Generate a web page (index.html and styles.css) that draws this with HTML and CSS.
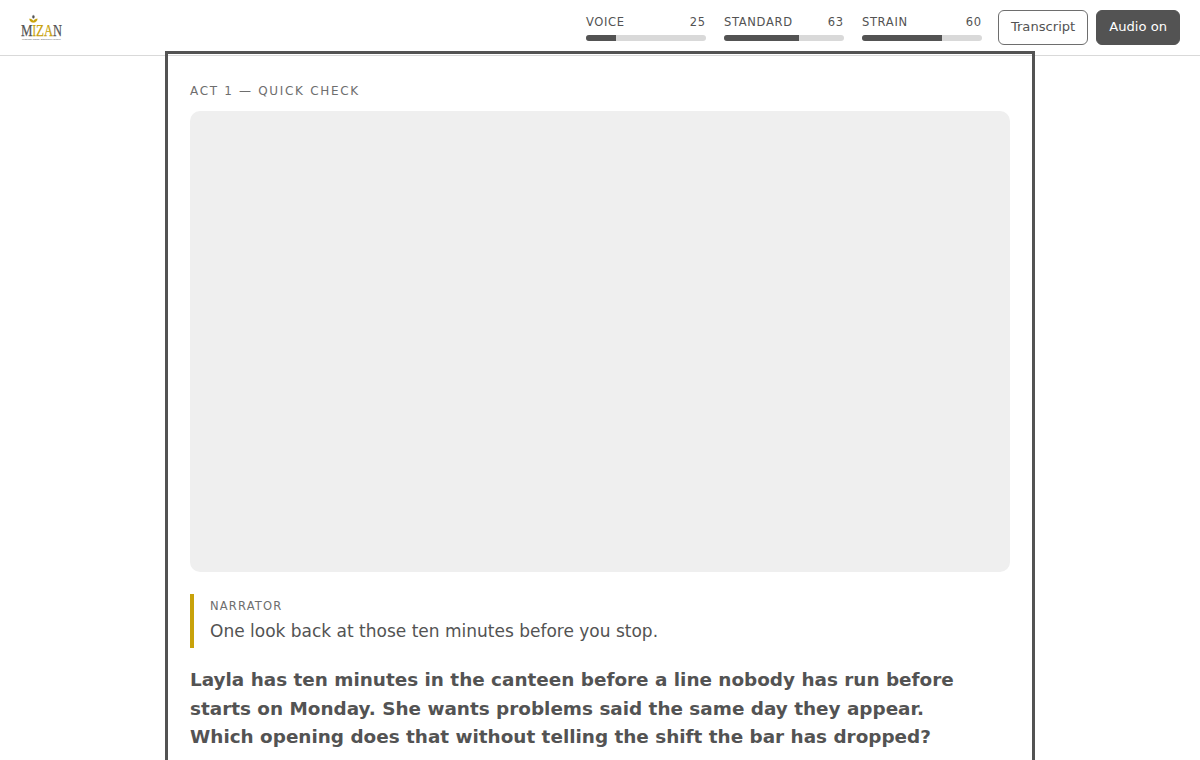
FILE: index.html
```
<!DOCTYPE html>
<html lang="en">
  <head>
    <meta charset="UTF-8">
    <meta name="viewport" content="width=device-width, initial-scale=1.0">
    <title>Mizan</title>
    <link rel="stylesheet" href="styles.css">
  </head>
  <body>
    <header class="topbar">
      <svg class="logo" viewBox="0 0 44 30" role="img" aria-label="Mizan">
        <!-- Crown over the I -->
        <ellipse class="logo-dark" cx="13.4" cy="3.8" rx="1.1" ry="1.6"/>
        <path class="logo-gold" d="M9.4 5.8c1.8 0 3 .8 4 2.2 1-1.4 2.2-2.2 4-2.2-.4 2.5-1.8 3.7-4 3.7s-3.6-1.2-4-3.7z"/>
        <!-- Wordmark -->
        <text class="logo-word" y="22.6"><tspan class="logo-dark" x="1" textLength="11.5" lengthAdjust="spacingAndGlyphs">M</tspan><tspan class="logo-gold" x="12.5" textLength="3.5" lengthAdjust="spacingAndGlyphs">I</tspan><tspan class="logo-gold" x="16" textLength="8" lengthAdjust="spacingAndGlyphs">Z</tspan><tspan class="logo-gold" x="24" textLength="9" lengthAdjust="spacingAndGlyphs">A</tspan><tspan class="logo-dark" x="33" textLength="9" lengthAdjust="spacingAndGlyphs">N</tspan></text>
        <text class="logo-tagline" x="2" y="27.2" textLength="39" lengthAdjust="spacingAndGlyphs">Measurable Change. Standards for Conduct.</text>
      </svg>
      <div class="meters">
        <div class="meter">
          <div class="meter-label"><span>Voice</span><span>25</span></div>
          <div class="meter-track"><div class="meter-fill" style="width: 25%"></div></div>
        </div>
        <div class="meter">
          <div class="meter-label"><span>Standard</span><span>63</span></div>
          <div class="meter-track"><div class="meter-fill" style="width: 62.5%"></div></div>
        </div>
        <div class="meter">
          <div class="meter-label"><span>Strain</span><span>60</span></div>
          <div class="meter-track"><div class="meter-fill" style="width: 66.7%"></div></div>
        </div>
      </div>
      <div class="controls">
        <button class="btn" type="button">Transcript</button>
        <button class="btn btn-on" type="button">Audio on</button>
      </div>
    </header>

    <main class="stage" tabindex="-1">
      <p class="eyebrow">Act 1 — Quick check</p>
      <div class="media"></div>
      <div class="line">
        <div class="speaker">Narrator</div>
        <p class="speech">One look back at those ten minutes before you stop.</p>
      </div>
      <h2 class="prompt">Layla has ten minutes in the canteen before a line nobody has run before starts on Monday. She wants problems said the same day they appear. Which opening does that without telling the shift the bar has dropped?</h2>
    </main>
  </body>
</html>
```
FILE: styles.css
```
* {
  box-sizing: border-box;
}
body {
  margin: 0;
  height: 100vh;
  overflow: hidden;
  background: #fff;
  color: #535353;
  font-family: "DejaVu Sans", sans-serif;
  font-size: 17px;
  line-height: 1.5;
}
/* Top bar */
.topbar {
  display: flex;
  align-items: center;
  gap: 16px;
  height: 56px;
  padding: 0 20px;
  border-bottom: 1px solid #d9d9d9;
}
.logo {
  width: 44px;
  height: 30px;
  margin-right: auto;
  overflow: visible;
}
.logo-dark {
  fill: #535353;
  stroke: #535353;
}
.logo-gold {
  fill: #c8a20a;
  stroke: #c8a20a;
}
.logo-dark,
.logo-gold {
  stroke-width: 0.25px;
}
.logo-word {
  font-family: "Liberation Serif", serif;
  font-size: 17.5px;
}
.logo-tagline {
  font-family: "Liberation Sans", sans-serif;
  font-size: 2.2px;
  fill: #535353;
}
/* Meters */
.meters {
  display: flex;
  gap: 18px;
}
.meter {
  width: 120px;
}
.meter-label {
  display: flex;
  justify-content: space-between;
  margin-bottom: 4px;
  font-size: 11.52px;
  letter-spacing: 0.06em;
  line-height: 17px;
  text-transform: uppercase;
}
.meter-track {
  height: 6px;
  border-radius: 3px;
  background: #d9d9d9;
  overflow: hidden;
}
.meter-fill {
  height: 100%;
  background: #535353;
}
/* Buttons */
.controls {
  display: flex;
  gap: 8px;
}
.btn {
  height: 35px;
  padding: 0 12px 2px;
  border: 1px solid #6e6e6e;
  border-radius: 6px;
  background: #fff;
  color: #535353;
  font: inherit;
  font-size: 13.12px;
  cursor: pointer;
}
.btn-on {
  border-color: #535353;
  background: #535353;
  color: #fff;
}
/* Scene */
.stage {
  max-width: 860px;
  margin: 0 auto;
  padding: 24px 20px 60px;
  outline: 3px solid #535353;
  outline-offset: 2px;
}
.eyebrow {
  margin: 0 0 8px;
  color: #6e6e6e;
  font-size: 12px;
  letter-spacing: 0.14em;
  line-height: 23px;
  text-transform: uppercase;
}
.media {
  aspect-ratio: 16 / 9;
  border-radius: 10px;
  background: #efefef;
}
.line {
  margin: 22px 0 18px;
  padding: 2px 0 2px 16px;
  border-left: 4px solid #c8a20a;
}
.speaker {
  color: #6e6e6e;
  font-size: 11.52px;
  letter-spacing: 0.1em;
  line-height: 20px;
  text-transform: uppercase;
}
.speech {
  margin: 0;
  line-height: 30px;
}
.prompt {
  max-width: 780px;
  margin: 0;
  font-size: 18.4px;
  line-height: 1.55;
}
```
